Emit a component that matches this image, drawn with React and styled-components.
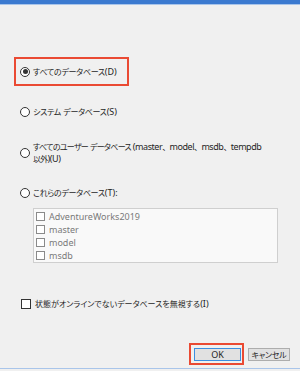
import React from "react";
import styled, { createGlobalStyle } from "styled-components";

const Global = createGlobalStyle`
  html, body { margin: 0; padding: 0; background: #f0f0f0; }
  body {
    font-family: "Noto Sans", "Noto Sans CJK JP", sans-serif;
    color: #1f1f1f;
  }
`;

const Window = styled.div`
  width: 300px;
  height: 371px;
  display: flex;
  flex-direction: column;
  background: #f0f0f0;
  overflow: hidden;
  font-size: 9px;
`;

const TopBar = styled.div`
  height: 4px;
  background: #3b7ad0;
  border-bottom: 1px solid #a9c5ea;
  flex: none;
`;

const Main = styled.div`
  flex: 1;
  display: flex;
  flex-direction: column;
  padding-top: 52px;
`;

const Highlight = styled.div`
  box-sizing: border-box;
  margin-left: 14px;
  width: 115px;
  height: 29px;
  border: 2px solid #ea4a33;
  padding-left: 4px;
  display: flex;
  align-items: center;
`;

const Option = styled.label`
  display: flex;
  align-items: center;
  gap: 3px;
  margin-left: ${(p) => p.$indent ?? 20}px;
  margin-top: ${(p) => p.$top ?? 0}px;
  line-height: 12px;
  white-space: nowrap;
`;

const Radio = styled.span`
  box-sizing: border-box;
  flex: none;
  width: 10px;
  height: 10px;
  border-radius: 50%;
  border: 1px solid #333;
  background: #fff;
  display: flex;
  align-items: center;
  justify-content: center;
  &::after {
    content: "";
    width: 5px;
    height: 5px;
    border-radius: 50%;
    background: ${(p) => (p.$checked ? "#333" : "transparent")};
  }
`;

const Label = styled.span`
  white-space: nowrap;
  letter-spacing: ${(p) => (p.$tight ? "-0.45px" : "normal")};
  & > span {
    ${(p) => (p.$tight ? "letter-spacing: -0.7px;" : "")}
    ${(p) => (p.$loose ? "letter-spacing: 0;" : "")}
  }
`;

const Jp = styled.span`
  font-family: "Noto Sans CJK JP", sans-serif;
  font-feature-settings: ${(p) => (p.$full ? "normal" : '"palt"')};
  font-size: 8px;
  letter-spacing: ${(p) => (p.$full ? "0" : "-0.3px")};
`;

const ListBox = styled.div`
  box-sizing: border-box;
  margin-left: 33px;
  margin-top: 9px;
  width: 245px;
  height: 55px;
  border: 1px solid #cfcfcf;
  background: #f9f9f9;
  padding: 1px 0 0 2px;
  display: flex;
  flex-direction: column;
`;

const ListItem = styled.div`
  height: 13.6px;
  display: flex;
  align-items: center;
  gap: 4px;
  color: #7a7a7a;
  line-height: 12px;
`;

const Box = styled.span`
  box-sizing: border-box;
  flex: none;
  width: ${(p) => p.$size ?? 9}px;
  height: ${(p) => p.$size ?? 9}px;
  border: 1px solid ${(p) => p.$color ?? "#333"};
  background: #fff;
`;

const CheckRow = styled.label`
  display: flex;
  align-items: center;
  gap: 4px;
  margin-left: 21px;
  margin-top: 35px;
  line-height: 12px;
  white-space: nowrap;
`;

const Footer = styled.div`
  flex: none;
  display: flex;
  justify-content: flex-end;
  align-items: center;
  padding: 0 10px 3px 0;
  gap: 4px;
`;

const DefaultFrame = styled.div`
  border: 2px solid #ea4a33;
  padding: 3px 1px 2px 3px;
  display: flex;
`;

const Button = styled.button`
  box-sizing: border-box;
  height: 13px;
  width: ${(p) => p.$w}px;
  margin: 0;
  padding: 0;
  font: inherit;
  font-size: 9px;
  line-height: 11px;
  white-space: nowrap;
  color: #1f1f1f;
  background: #e1e1e1;
  border: 1px solid ${(p) => (p.$default ? "#3c8ee0" : "#adadad")};
  display: flex;
  align-items: center;
  justify-content: center;
`;

const BottomLine = styled.div`
  flex: none;
  height: 1px;
  background: #a9c5ea;
  margin-bottom: 2px;
`;

// Split a string into runs: Japanese punctuation "、" (full width), other
// Japanese (proportional), and Latin text.
function T({ children }) {
  const parts = String(children).split(/(、|[\u3000-\u30ff\u4e00-\u9fff\uff00-\uffef]+)/);
  return parts.map((s, i) => {
    if (i % 2 === 0) return <React.Fragment key={i}>{s}</React.Fragment>;
    return s === "、" ? <Jp key={i} $full>{s}</Jp> : <Jp key={i}>{s}</Jp>;
  });
}

const dbs = ["AdventureWorks2019", "master", "model", "msdb"];

export default function App() {
  return (
    <>
      <Global />
      <Window>
        <TopBar />
        <Main>
          <Highlight>
            <Option $indent={0}>
              <Radio $checked />
              <Label><T>すべてのデータベース(D)</T></Label>
            </Option>
          </Highlight>
          <Option $top={20}>
            <Radio />
            <Label><T>システム データベース(S)</T></Label>
          </Option>
          <Option $top={23}>
            <Radio />
            <Label $tight>
              <T>すべてのユーザー データベース (master、model、msdb、tempdb</T>
              <br />
              <T>以外)(U)</T>
            </Label>
          </Option>
          <Option $top={22}>
            <Radio />
            <Label><T>これらのデータベース(T):</T></Label>
          </Option>
          <ListBox>
            {dbs.map((d) => (
              <ListItem key={d}>
                <Box $color="#8a8a8a" />
                <span>{d}</span>
              </ListItem>
            ))}
          </ListBox>
          <CheckRow>
            <Box $size={10} />
            <Label $loose><T>状態がオンラインでないデータベースを無視する(I)</T></Label>
          </CheckRow>
        </Main>
        <Footer>
          <DefaultFrame>
            <Button $w={47} $default>OK</Button>
          </DefaultFrame>
          <Button $w={42}><T>キャンセル</T></Button>
        </Footer>
        <BottomLine />
      </Window>
    </>
  );
}
